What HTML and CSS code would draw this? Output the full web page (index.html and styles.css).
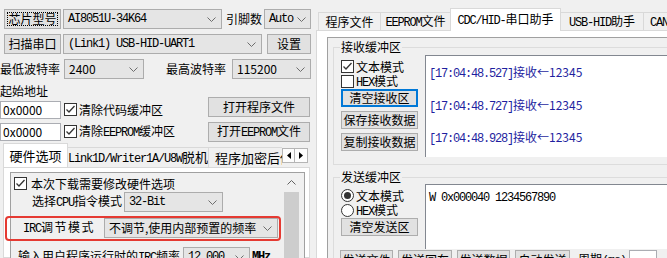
FILE: index.html
```html
<!DOCTYPE html>
<html lang="zh-CN">
<head>
    <meta charset="UTF-8">
    <title>STC-ISP</title>
    <link rel="stylesheet" href="styles.css">
</head>
<body>
<div class="app">
    <section class="left">
        <div class="row">
            <button class="btn btn-side focused">芯片型号</button>
            <div class="combo combo-chip"><span class="m">AI8051U-34K64</span><svg class="dd" width="9" height="5" viewBox="0 0 9 5"><path d="M.5 .5 4.5 4.5 8.5 .5"/></svg></div>
            <span class="pins-label">引脚数</span>
            <div class="combo combo-pins"><span class="m">Auto</span><svg class="dd" width="9" height="5" viewBox="0 0 9 5"><path d="M.5 .5 4.5 4.5 8.5 .5"/></svg></div>
        </div>
        <div class="row">
            <button class="btn btn-side">扫描串口</button>
            <div class="combo combo-port"><span class="m">(Link1) USB-HID-UART1</span><svg class="dd" width="9" height="5" viewBox="0 0 9 5"><path d="M.5 .5 4.5 4.5 8.5 .5"/></svg></div>
            <button class="btn btn-set">设置</button>
        </div>
        <div class="row">
            <span class="baud-label">最低波特率</span>
            <div class="combo combo-min">2400<svg class="dd" width="9" height="5" viewBox="0 0 9 5"><path d="M.5 .5 4.5 4.5 8.5 .5"/></svg></div>
            <span class="baud-label baud-max">最高波特率</span>
            <div class="combo combo-max">115200<svg class="dd" width="9" height="5" viewBox="0 0 9 5"><path d="M.5 .5 4.5 4.5 8.5 .5"/></svg></div>
        </div>

        <div class="addr-title">起始地址</div>
        <div class="addr-row">
            <div class="edit addr-edit">0x0000</div>
            <label class="check"><span class="box"><svg width="11" height="11" viewBox="0 0 11 11"><path d="M1.5 5.5 4 8 9.5 2"/></svg></span><span>清除代码缓冲区</span></label>
            <button class="btn btn-open">打开程序文件</button>
        </div>
        <div class="addr-row second">
            <div class="edit addr-edit">0x0000</div>
            <label class="check"><span class="box"><svg width="11" height="11" viewBox="0 0 11 11"><path d="M1.5 5.5 4 8 9.5 2"/></svg></span><span>清除<span class="m">EEPROM</span>缓冲区</span></label>
            <button class="btn btn-open"><span>打开<span class="m">EEPROM</span>文件</span></button>
        </div>

        <div class="hw-tabs">
            <div class="tab-list">
                <div class="tab active tab-hw">硬件选项</div>
                <div class="tab tab-link"><span><span class="m">Link1D/Writer1A/U8W</span>脱机</span></div>
                <div class="tab tab-enc">程序加密后传输</div>
            </div>
            <div class="tab-scroll">
                <span class="arrow-btn"><svg width="4" height="7" viewBox="0 0 4 7"><path d="M4 0V7L0 3.5Z"/></svg></span>
                <span class="arrow-btn"><svg width="4" height="7" viewBox="0 0 4 7"><path d="M0 0V7L4 3.5Z"/></svg></span>
            </div>
        </div>
        <div class="hw-page">
            <div class="hw-box">
                <div class="hw-options">
                    <label class="check hw-check"><span class="box"><svg width="11" height="11" viewBox="0 0 11 11"><path d="M1.5 5.5 4 8 9.5 2"/></svg></span><span>本次下载需要修改硬件选项</span></label>
                    <div class="opt-row cpu-row">
                        <span>选择<span class="m">CPU</span>指令模式</span>
                        <div class="combo combo-cpu"><span class="m">32-Bit</span><svg class="dd" width="9" height="5" viewBox="0 0 9 5"><path d="M.5 .5 4.5 4.5 8.5 .5"/></svg></div>
                    </div>
                    <div class="opt-row irc-row">
                        <span class="irc-label"><span class="m">IRC</span>调节模式</span>
                        <div class="combo combo-irc">不调节,使用内部预置的频率<svg class="dd" width="9" height="5" viewBox="0 0 9 5"><path d="M.5 .5 4.5 4.5 8.5 .5"/></svg></div>
                    </div>
                    <div class="opt-row freq-row">
                        <span>输入用户程序运行时的<span class="m">IRC</span>频率</span>
                        <div class="combo combo-freq"><span class="m">12.000</span><svg class="dd" width="9" height="5" viewBox="0 0 9 5"><path d="M.5 .5 4.5 4.5 8.5 .5"/></svg></div>
                        <span class="m mhz">MHz</span>
                    </div>
                </div>
                <div class="vscroll">
                    <div class="vscroll-up"><svg width="9" height="5" viewBox="0 0 9 5"><path d="M.5 4.5 4.5 .5 8.5 4.5"/></svg></div>
                    <div class="vscroll-thumb"></div>
                </div>
            </div>
        </div>

        <!-- red mark drawn over the IRC row -->
        <div class="highlight"></div>
    </section>

    <section class="right">
        <div class="right-tabs">
            <div class="tab rt-prog">程序文件</div>
            <div class="tab rt-eep"><span><span class="m">EEPROM</span>文件</span></div>
            <div class="tab active rt-cdc"><span><span class="m">CDC/HID-</span>串口助手</span></div>
            <div class="tab rt-usb"><span><span class="m">USB-HID</span>助手</span></div>
            <div class="tab rt-can"><span><span class="m">CAN</span>助手</span></div>
        </div>
        <div class="serial-page">
            <div class="frame">
                <div class="group recv-group">
                    <div class="group-title">接收缓冲区</div>
                    <div class="group-body">
                        <div class="side">
                            <label class="check first"><span class="box"><svg width="11" height="11" viewBox="0 0 11 11"><path d="M1.5 5.5 4 8 9.5 2"/></svg></span><span>文本模式</span></label>
                            <label class="check"><span class="box"></span><span><span class="m">HEX</span>模式</span></label>
                            <button class="btn btn-col default">清空接收区</button>
                            <button class="btn btn-col">保存接收数据</button>
                            <button class="btn btn-col">复制接收数据</button>
                        </div>
                        <div class="textbox recv-box">
                            <div><span class="m">[17:04:48.527]</span>接收←12345</div>
                            <div><span class="m">[17:04:48.727]</span>接收←12345</div>
                            <div><span class="m">[17:04:48.928]</span>接收←12345</div>
                        </div>
                    </div>
                </div>

                <div class="group send-group">
                    <div class="group-title">发送缓冲区</div>
                    <div class="group-body">
                        <div class="side">
                            <label class="check first"><span class="radio on"></span><span>文本模式</span></label>
                            <label class="check"><span class="radio"></span><span><span class="m">HEX</span>模式</span></label>
                            <button class="btn btn-col">清空发送区</button>
                        </div>
                        <div class="textbox send-box"><span class="m">W 0x000040 1234567890</span></div>
                    </div>
                    <div class="send-actions">
                        <button class="btn act-file">发送文件</button>
                        <button class="btn act-cr">发送回车</button>
                        <button class="btn act-data">发送数据</button>
                        <button class="btn act-auto">自动发送</button>
                        <span class="period">周期<span class="m">(ms)</span></span>
                        <div class="edit period-edit"></div>
                    </div>
                </div>
            </div>
        </div>
    </section>
</div>
</body>
</html>
```

FILE: styles.css
```css
* {
    box-sizing: border-box;
}

body {
    margin: 0;
    background: #f0f0f0;
    color: #000;
    font-family: "Noto Sans CJK SC", "Liberation Sans", sans-serif;
    font-size: 12px;
    line-height: 14px;
    overflow: hidden;
}

.app {
    display: flex;
    width: 667px;
    height: 258px;
    overflow: hidden;
}

/* SimSun-like half width latin */
.m {
    font-family: "Liberation Mono", monospace;
    font-size: 12px;
    letter-spacing: -1.2px;
}

/* ---------- common controls ---------- */

.btn {
    display: flex;
    align-items: center;
    justify-content: center;
    flex: none;
    height: 20px;
    padding: 0;
    background: #e1e1e1;
    border: 1px solid #adadad;
    color: #000;
    font: inherit;
    white-space: nowrap;
}

.btn.focused {
    outline: 1px dotted #000;
    outline-offset: -4px;
}

.btn.default {
    border-color: #0078d7;
    box-shadow: inset 0 0 0 1px #0078d7;
}

.combo {
    display: flex;
    align-items: center;
    justify-content: space-between;
    flex: none;
    height: 20px;
    padding: 0 5px 0 4px;
    background: #e5e5e5;
    border: 1px solid #acacac;
    white-space: nowrap;
    overflow: hidden;
}

.dd {
    flex: none;
    margin-left: 4px;
}

.dd path {
    fill: none;
    stroke: #6d6d6d;
}

.edit {
    display: flex;
    align-items: center;
    height: 18px;
    padding-left: 2px;
    background: #fff;
    border: 1px solid #abadb3;
}

.check {
    display: flex;
    align-items: center;
    height: 15px;
    line-height: 13px;
    white-space: nowrap;
}

.box,
.radio {
    display: flex;
    align-items: center;
    justify-content: center;
    flex: none;
    width: 13px;
    height: 13px;
    margin-right: 2px;
    background: #fff;
    border: 1px solid #333;
}

.box path {
    fill: none;
    stroke: #333;
    stroke-width: 1.3;
}

.radio {
    border-radius: 50%;
}

.radio.on::after {
    content: "";
    width: 7px;
    height: 7px;
    border-radius: 50%;
    background: #333;
}

/* ---------- left panel ---------- */

.left {
    position: relative;
    flex: none;
    width: 316px;
    padding-top: 9px;
}

.row {
    display: flex;
    align-items: center;
    height: 20px;
    margin-bottom: 5px;
}

.btn-side {
    width: 57px;
    margin-left: 4px;
}

.combo-chip {
    width: 159px;
    margin-left: 2px;
}

.pins-label {
    width: 36px;
    margin-left: 4px;
}

.combo-pins {
    width: 47px;
    margin-left: 2px;
}

.combo-port {
    width: 199px;
    margin-left: 2px;
}

.btn-set {
    width: 44px;
    margin-left: 5px;
}

.baud-label {
    width: 62px;
}

.baud-max {
    margin-left: 22px;
}

.combo-min {
    width: 80px;
    margin-left: 2px;
}

.combo-max {
    width: 79px;
    margin-left: 4px;
}

.addr-title {
    height: 13px;
}

.addr-row {
    display: flex;
    align-items: flex-start;
    height: 25px;
}

.addr-row.second {
    height: 21px;
}

.addr-edit {
    width: 61px;
    margin-top: 4px;
}

.addr-row .check {
    margin: 5px 0 0 3px;
}

.addr-row.second .addr-edit {
    margin-top: 1px;
}

.addr-row.second .check {
    margin-top: 2px;
}

.btn-open {
    width: 102px;
    margin-left: auto;
    margin-right: 6px;
}

/* tab strips */
.hw-tabs {
    display: flex;
    align-items: flex-end;
    width: 306px;
    height: 24px;
    margin-left: 3px;
}

.tab-list {
    display: flex;
    align-items: flex-end;
    width: 279px;
    overflow: hidden;
}

.tab {
    display: flex;
    align-items: center;
    justify-content: center;
    flex: none;
    height: 20px;
    margin-right: -1px;
    background: #f0f0f0;
    border: 1px solid #d9d9d9;
    border-bottom: none;
    white-space: nowrap;
    overflow: hidden;
}

.tab.active {
    position: relative;
    z-index: 1;
    height: 25px;
    margin-bottom: -1px;
    background: #fff;
}

.hw-tabs .tab {
    font-size: 13px;
}

.tab-hw { width: 65px; }
.tab-link { width: 142px; }
.tab-enc { width: 90px; justify-content: flex-start; padding-left: 6px; }

.tab-scroll {
    display: flex;
    align-self: flex-start;
    margin-top: 5px;
}

.arrow-btn {
    display: flex;
    align-items: center;
    justify-content: center;
    width: 13px;
    height: 15px;
    background: #fdfdfd;
    border: 1px solid #b5b5b5;
}

.arrow-btn + .arrow-btn {
    border-left: none;
}

.hw-page {
    width: 307px;
    height: 91px;
    margin-left: 3px;
    padding: 4px 0 0 6px;
    background: #fff;
    border: 1px solid #d9d9d9;
}

.hw-box {
    display: flex;
    width: 295px;
    height: 100px;
    background: #f0f0f0;
    border: 1px solid #a0a0a0;
}

.hw-options {
    flex: 1;
}

.hw-check {
    height: 14px;
    margin: 3px 0 0 3px;
}

.hw-check .box {
    margin-right: 4px;
}

.opt-row {
    display: flex;
    align-items: center;
    height: 20px;
    white-space: nowrap;
}

.cpu-row {
    margin-top: 2px;
    padding-left: 21px;
}

.combo-cpu {
    width: 99px;
    margin-left: 2px;
}

.irc-row {
    margin-top: 6px;
    padding-left: 12px;
}

.irc-label {
    width: 81px;
    letter-spacing: 1.5px;
}

.irc-label .m {
    letter-spacing: -1.2px;
}

.combo-irc {
    width: 174px;
}

.freq-row {
    margin-top: 9px;
    padding-left: 7px;
}

.combo-freq {
    width: 67px;
    margin-left: 3px;
}

.mhz {
    margin-left: 2px;
    font-weight: bold;
}

.vscroll {
    flex: none;
    width: 17px;
    margin-right: 4px;
}

.vscroll-up {
    display: flex;
    align-items: center;
    justify-content: center;
    height: 19px;
}

.vscroll-up path {
    fill: none;
    stroke: #606060;
}

.vscroll-thumb {
    height: 80px;
    margin: 0 1px;
    background: #cdcdcd;
}

.highlight {
    position: absolute;
    left: 5px;
    top: 216px;
    width: 276px;
    height: 25px;
    border: 2px solid #e53a32;
    border-radius: 4px;
}

/* ---------- right panel ---------- */

.right {
    flex: none;
    width: 360px;
}

.right-tabs {
    display: flex;
    align-items: flex-end;
    height: 30px;
    padding-left: 2px;
}

.right-tabs .tab {
    height: 18px;
}

.right-tabs .tab.active {
    height: 23px;
}

.rt-prog { width: 63px; }
.rt-eep { width: 71px; }
.rt-cdc { width: 111px; }
.rt-usb { width: 84px; }
.rt-can { width: 60px; justify-content: flex-start; padding-left: 6px; }

.serial-page {
    height: 228px;
    padding: 6px 0 0 10px;
    background: #fff;
    border-top: 1px solid #d9d9d9;
    border-left: 1px solid #d9d9d9;
}

.frame {
    height: 230px;
    padding-left: 5px;
    background: #f0f0f0;
    border-top: 1px solid #a0a0a0;
    border-left: 1px solid #a0a0a0;
}

.group {
    border: 1px solid #dcdcdc;
    border-right: none;
}

.recv-group {
    margin-top: 9px;
    padding-bottom: 7px;
}

.send-group {
    margin-top: 12px;
}

.group-title {
    width: max-content;
    margin: -8px 0 0 6px;
    padding: 0 1px;
    background: #f0f0f0;
}

.group-body {
    display: flex;
    padding-left: 7px;
}

.side {
    flex: none;
    width: 77px;
    margin-right: 7px;
}

.side .check.first {
    margin-top: 5px;
}

.send-group .side .check.first {
    margin-top: 4px;
}

.btn-col {
    width: 77px;
    height: 18px;
    margin-top: 4px;
}

.side .check + .btn-col {
    margin-top: 0;
}

.textbox {
    flex: 1;
    background: #fff;
    border-top: 1px solid #828790;
    border-left: 1px solid #828790;
    white-space: nowrap;
}

.recv-box {
    height: 102px;
    margin-top: 1px;
    padding: 1px 0 0 3px;
    color: #1f1f9f;
    line-height: 30.5px;
}

.send-box {
    height: 65px;
    padding: 4px 0 0 3px;
}

.send-actions {
    display: flex;
    align-items: center;
    margin-top: 1px;
    padding-left: 6px;
    white-space: nowrap;
}

.send-actions .btn {
    margin-right: 5px;
}

.act-file { width: 53px; }
.act-cr { width: 54px; }
.act-data { width: 53px; }
.act-auto { width: 55px; }

.period {
    margin-left: 3px;
}

.period-edit {
    width: 28px;
    height: 20px;
    margin-left: 3px;
}
```
